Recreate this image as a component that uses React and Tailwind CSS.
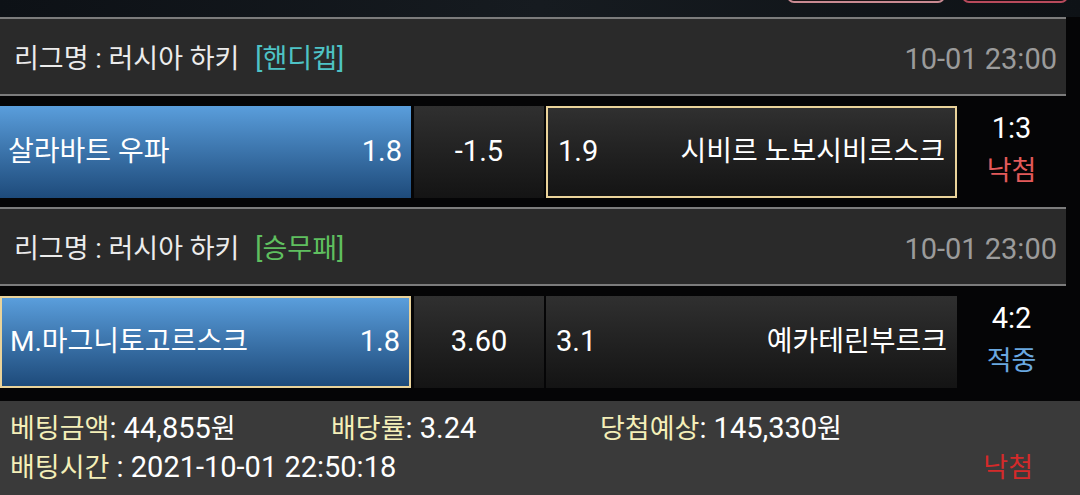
import React from "react";

const font = { fontFamily: "Roboto, 'Noto Sans CJK KR', sans-serif" };

const matches = [
  {
    type: "[핸디캡]",
    typeColor: "text-[#4ec3c6]",
    time: "10-01 23:00",
    home: "살라바트 우파",
    homeOdds: "1.8",
    mid: "-1.5",
    awayOdds: "1.9",
    away: "시비르 노보시비르스크",
    pick: "away",
    score: "1:3",
    result: "낙첨",
    resultColor: "text-[#e35a5a]",
  },
  {
    type: "[승무패]",
    typeColor: "text-[#5fbf5f]",
    time: "10-01 23:00",
    home: "M.마그니토고르스크",
    homeOdds: "1.8",
    mid: "3.60",
    awayOdds: "3.1",
    away: "예카테린부르크",
    pick: "home",
    score: "4:2",
    result: "적중",
    resultColor: "text-[#6aa8e0]",
  },
];

function Header({ m }) {
  return (
    <div className="mr-[14px] h-[79px] flex items-center justify-between bg-[#2a2a2a] border-y-2 border-[#7c7c7c] pl-[14px] pr-[9px] pt-[6px]">
      <div className="text-[27px] text-[#ececec] flex items-center gap-[16px]">
        <span>리그명 : 러시아 하키</span>
        <span className={m.typeColor}>{m.type}</span>
      </div>
      <span className="text-[29px] text-[#9b9b9b]">{m.time}</span>
    </div>
  );
}

function Row({ m }) {
  const sel = "border-2 border-[#ead39a]";
  return (
    <div className="flex h-[92px] mr-[14px]">
      <div
        className={`w-[411px] flex items-center justify-between pl-[8px] pr-[9px] bg-gradient-to-b from-[#5a9edc] to-[#1e4b7b] text-white text-[28px] ${
          m.pick === "home" ? sel : ""
        }`}
      >
        <span>{m.home}</span>
        <span className="text-[29px]">{m.homeOdds}</span>
      </div>
      <div className="ml-[3px] w-[130px] flex items-center justify-center bg-gradient-to-b from-[#303030] to-[#141414] text-white text-[29px]">
        {m.mid}
      </div>
      <div
        className={`ml-[2px] w-[411px] flex items-center justify-between pl-[10px] pr-[10px] bg-gradient-to-b from-[#303030] to-[#141414] text-white text-[28px] ${
          m.pick === "away" ? sel : ""
        }`}
      >
        <span className="text-[29px]">{m.awayOdds}</span>
        <span>{m.away}</span>
      </div>
      <div className="flex-1 flex flex-col items-center justify-center gap-[5px] text-[27px] leading-[38px] pb-[6px]">
        <span className="text-white text-[29px]">{m.score}</span>
        <span className={m.resultColor}>{m.result}</span>
      </div>
    </div>
  );
}

export default function App() {
  return (
    <div className="w-[1080px] h-[495px] overflow-hidden bg-[#050506] flex flex-col" style={font}>
      {/* top strip of background with buttons peeking */}
      <div className="h-[17px] bg-gradient-to-r from-[#0d1116] via-[#161b20] to-[#0e1216] flex justify-end items-start pr-[12px] gap-[17px] overflow-hidden">
        <div className="-mt-[20px] w-[158px] h-[23px] rounded-[7px] border-2 border-[#c98a92] bg-[#1b1416]" />
        <div className="-mt-[20px] w-[106px] h-[23px] rounded-[7px] border-2 border-[#b84a5c] bg-[#1b1014]" />
      </div>

      <Header m={matches[0]} />
      <div className="h-[10px]" />
      <Row m={matches[0]} />
      <div className="h-[9px]" />
      <Header m={matches[1]} />
      <div className="h-[10px]" />
      <Row m={matches[1]} />
      <div className="h-[13px]" />

      <div className="flex-1 bg-[#3a3a3a] px-[10px] pt-[8px] text-[27px] text-white">
        <div className="flex h-[40px] items-center">
          <div className="w-[321px]">
            <span className="text-[#f4efb8]">베팅금액</span>
            <span className="text-[29px]">: 44,855</span>원
          </div>
          <div className="w-[269px]">
            <span className="text-[#f4efb8]">배당률</span>
            <span className="text-[29px]">: 3.24</span>
          </div>
          <div>
            <span className="text-[#f4efb8]">당첨예상</span>
            <span className="text-[29px]">: 145,330</span>원
          </div>
        </div>
        <div className="flex h-[38px] items-center justify-between pr-[37px]">
          <div>
            <span className="text-[#f4efb8]">배팅시간</span>
            <span className="text-[29px]"> : 2021-10-01 22:50:18</span>
          </div>
          <span className="text-[#d42a2a]">낙첨</span>
        </div>
      </div>
    </div>
  );
}
